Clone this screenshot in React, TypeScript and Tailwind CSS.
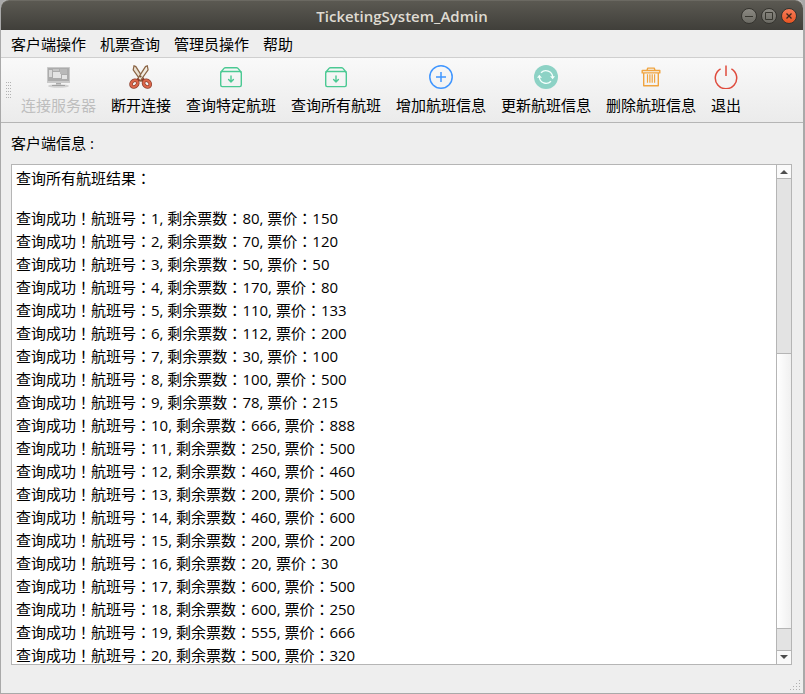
import type { ReactNode } from 'react';

interface ToolAction {
  label: string;
  icon: ReactNode;
  disabled?: boolean;
}

interface Flight {
  id: number;
  tickets: number;
  price: number;
}

const menus = ['客户端操作', '机票查询', '管理员操作', '帮助'];

const flights: Flight[] = [
  { id: 1, tickets: 80, price: 150 },
  { id: 2, tickets: 70, price: 120 },
  { id: 3, tickets: 50, price: 50 },
  { id: 4, tickets: 170, price: 80 },
  { id: 5, tickets: 110, price: 133 },
  { id: 6, tickets: 112, price: 200 },
  { id: 7, tickets: 30, price: 100 },
  { id: 8, tickets: 100, price: 500 },
  { id: 9, tickets: 78, price: 215 },
  { id: 10, tickets: 666, price: 888 },
  { id: 11, tickets: 250, price: 500 },
  { id: 12, tickets: 460, price: 460 },
  { id: 13, tickets: 200, price: 500 },
  { id: 14, tickets: 460, price: 600 },
  { id: 15, tickets: 200, price: 200 },
  { id: 16, tickets: 20, price: 30 },
  { id: 17, tickets: 600, price: 500 },
  { id: 18, tickets: 600, price: 250 },
  { id: 19, tickets: 555, price: 666 },
  { id: 20, tickets: 500, price: 320 },
];

function ComputerIcon() {
  return (
    <svg width="24" height="24" viewBox="0 0 24 24">
      <rect x="0" y="2" width="23" height="16" rx="0.5" fill="#c9c9c9" />
      <rect x="1" y="3" width="21" height="13" fill="#acacac" />
      <rect x="2" y="5" width="3" height="7" fill="#dadada" />
      <rect x="6" y="4" width="6" height="2" fill="#c4c4c4" />
      <rect x="6" y="7" width="8" height="6" fill="#e4e4e4" />
      <rect x="13" y="4" width="7" height="5" fill="#b9b9b9" />
      <rect x="15" y="10" width="5" height="4" fill="#e4e4e4" />
      <path d="M9 18h5v2H9z" fill="#aaa" />
      <ellipse cx="11.5" cy="21" rx="10.5" ry="1.8" fill="#d2d2d2" />
      <path d="M5 20.5h13" stroke="#a2a2a2" />
    </svg>
  );
}

function ScissorsIcon() {
  return (
    <svg width="24" height="24" viewBox="0 0 24 24" fill="none">
      <path d="M5 .8l1.8.8 8 12.5-2.6 2L4.2 4.8z" fill="#e9dfcf" stroke="#8a6444" strokeWidth="1.2" />
      <path d="M18.3.8l-1.8.8-8 12.5 2.6 2 8-11.3z" fill="#f1ebe0" stroke="#8a6444" strokeWidth="1.2" />
      <circle cx="11.6" cy="11.5" r="1" fill="#775439" />
      <path d="M10.2 14l-1.7 1.6M13.2 14l1.7 1.6" stroke="#8d3f2d" strokeWidth="3" />
      <ellipse cx="5.4" cy="18.6" rx="3" ry="3.7" transform="rotate(45 5.4 18.6)" stroke="#8d3f2d" strokeWidth="3.6" />
      <ellipse cx="5.4" cy="18.6" rx="3" ry="3.7" transform="rotate(45 5.4 18.6)" stroke="#dc664a" strokeWidth="2.2" />
      <ellipse cx="17.9" cy="18.6" rx="3" ry="3.7" transform="rotate(-45 17.9 18.6)" stroke="#8d3f2d" strokeWidth="3.6" />
      <ellipse cx="17.9" cy="18.6" rx="3" ry="3.7" transform="rotate(-45 17.9 18.6)" stroke="#dc664a" strokeWidth="2.2" />
    </svg>
  );
}

function ArchiveIcon() {
  return (
    <svg width="24" height="24" viewBox="0 0 24 24" fill="none" stroke="#4bc993" strokeWidth="1.4" strokeLinecap="round" strokeLinejoin="round">
      <rect x="1.7" y="6.5" width="20.6" height="15.1" rx="1.5" />
      <path d="M2 7l3-3.6q.6-.7 1.5-.7h11q.9 0 1.5.7L22 7" />
      <path d="M12 11v6M9.6 14.6l2.4 2.5 2.4-2.5" />
    </svg>
  );
}

function AddIcon() {
  return (
    <svg width="24" height="24" viewBox="0 0 24 24" fill="none" stroke="#4096ff" strokeWidth="1.5">
      <circle cx="12" cy="12" r="11.2" />
      <path d="M12 7v10M7 12h10" />
    </svg>
  );
}

function RefreshIcon() {
  return (
    <svg width="24" height="24" viewBox="0 0 24 24" fill="none">
      <circle cx="12" cy="12" r="12" fill="#8dd2c5" />
      <path d="M7 7.8a6.8 6.8 0 0 1 11.7 4.2M17 16.2a6.8 6.8 0 0 1-11.7-4.2" stroke="#f4fffc" strokeWidth="1.3" />
      <path d="M16 11.2h5l-2.3 3zM3 12.8h5l-2.7-3z" fill="#f4fffc" />
    </svg>
  );
}

function TrashIcon() {
  return (
    <svg width="24" height="24" viewBox="0 0 24 24" fill="none" stroke="#f0a43f" strokeWidth="1.4" strokeLinejoin="round">
      <path d="M3.2 5.5h17.6v2.4H3.2zM8 5.3l.8-2.2h6.4l.8 2.2M4.7 8.2v12.6h14.6V8.2" />
      <path d="M8.5 9.3v8.5M10.9 9.3v8.5M13.2 9.3v8.5M15.6 9.3v8.5" strokeWidth="1.2" />
    </svg>
  );
}

function PowerIcon() {
  return (
    <svg width="24" height="24" viewBox="0 0 24 24" fill="none" stroke="#df4b3d" strokeWidth="1.5">
      <path d="M6.6 3.8a10.7 10.7 0 1 0 10.8 0" />
      <path d="M12 .5V11" />
    </svg>
  );
}

const actions: ToolAction[] = [
  { label: '连接服务器', icon: <ComputerIcon />, disabled: true },
  { label: '断开连接', icon: <ScissorsIcon /> },
  { label: '查询特定航班', icon: <ArchiveIcon /> },
  { label: '查询所有航班', icon: <ArchiveIcon /> },
  { label: '增加航班信息', icon: <AddIcon /> },
  { label: '更新航班信息', icon: <RefreshIcon /> },
  { label: '删除航班信息', icon: <TrashIcon /> },
  { label: '退出', icon: <PowerIcon /> },
];

function TitleBar() {
  const button = 'w-4 h-4 rounded-full border border-[#35342f] flex items-center justify-center';

  return (
    <header className="h-[30px] shrink-0 rounded-t-lg border-t border-[#6b6962] bg-linear-to-b from-[#5b5952] to-[#403f3a] grid grid-cols-[1fr_auto_1fr] items-center px-1.5">
      <h1 className="col-start-2 font-semibold leading-5 text-[#dfdbd2]">TicketingSystem_Admin</h1>
      <div className="flex justify-end gap-1">
        <button aria-label="最小化" className={`${button} bg-linear-to-b from-[#8b8982] to-[#6c6b64]`}>
          <svg width="14" height="14" viewBox="0 0 14 14" stroke="#37362f">
            <path d="M3 7.5h8" />
          </svg>
        </button>
        <button aria-label="最大化" className={`${button} bg-linear-to-b from-[#8b8982] to-[#6c6b64]`}>
          <svg width="14" height="14" viewBox="0 0 14 14" stroke="#37362f" fill="none">
            <path d="M3.5 3.5h7v7h-7z" />
          </svg>
        </button>
        <button aria-label="关闭" className={`${button} bg-linear-to-b from-[#f67b57] to-[#e9541f]`}>
          <svg width="14" height="14" viewBox="0 0 14 14" stroke="#3d261c" strokeWidth="1.3">
            <path d="M4.5 4.5l5 5M9.5 4.5l-5 5" />
          </svg>
        </button>
      </div>
    </header>
  );
}

function ToolBar() {
  return (
    <div className="flex items-center shrink-0 h-[65px] pt-0.5 pl-1 border-b border-[#b5b5b5] bg-linear-to-b from-[#f9f9f9] to-[#ebebeb]">
      <svg width="6" height="18" viewBox="0 0 6 18" className="shrink-0" fill="#b3b3b3">
        {[0, 3, 6, 9, 12, 15].map((y) => (
          <path key={y} d={`M1 ${y}h1v1h-1zM3 ${y}h1v1h-1zM5 ${y}h1v1h-1z`} />
        ))}
      </svg>
      <div className="flex gap-[15px] pl-2.5">
        {actions.map((action) => (
          <button
            key={action.label}
            disabled={action.disabled}
            className="flex flex-col items-center gap-1 whitespace-nowrap leading-6 disabled:text-[#bebebe]"
          >
            {action.icon}
            {action.label}
          </button>
        ))}
      </div>
    </div>
  );
}

function ScrollBar() {
  return (
    <div className="w-[15px] shrink-0 flex flex-col border-l border-[#b5b5b5] bg-[#e3e3e3]">
      <button aria-label="向上滚动" className="h-3.5 shrink-0 flex items-center justify-center bg-[#fafafa] border-b border-[#b5b5b5]">
        <svg width="8" height="4" viewBox="0 0 8 4" fill="#4d4d4d">
          <path d="M4 0l4 4H0z" />
        </svg>
      </button>
      <div className="grow-[175]" />
      <div className="grow-[275] border-y border-[#b5b5b5] bg-linear-to-r from-white to-[#f0f0f0]" />
      <div className="grow-[21]" />
      <button aria-label="向下滚动" className="h-3.5 shrink-0 flex items-center justify-center bg-[#fafafa] border-t border-[#b5b5b5]">
        <svg width="8" height="4" viewBox="0 0 8 4" fill="#4d4d4d">
          <path d="M0 0h8L4 4z" />
        </svg>
      </button>
    </div>
  );
}

export default function App() {
  return (
    <div className="h-screen bg-[#a9a9a9] font-['Open_Sans','Noto_Sans_CJK_JP',sans-serif] text-[15px] text-black">
      <div className="h-full flex flex-col rounded-t-lg border-l border-r-2 border-b border-[#a9a9a9] bg-[#eee]">
        <TitleBar />

        <nav className="h-7 shrink-0 flex items-center gap-3.5 px-2.5 border-b border-[#cfcfcf]">
          {menus.map((menu) => (
            <button key={menu} className="whitespace-nowrap leading-6">
              {menu}
            </button>
          ))}
        </nav>

        <ToolBar />

        <main className="flex-1 min-h-0 flex flex-col pl-2.5 pr-[11px]">
          <h2 id="log-label" className="h-[41px] shrink-0 flex items-center whitespace-pre">
            客户端信息 :
          </h2>
          <div className="flex-1 min-h-0 flex border border-[#b5b5b5] bg-white">
            <div role="log" aria-labelledby="log-label" className="flex-1 min-w-0 overflow-hidden px-1 pt-0.5 leading-[23px] whitespace-nowrap">
              <p>查询所有航班结果：</p>
              <p className="h-[17px]" />
              {flights.map((f) => (
                <p key={f.id}>
                  查询成功！航班号：{f.id}, 剩余票数：{f.tickets}, 票价：{f.price}
                </p>
              ))}
            </div>
            <ScrollBar />
          </div>
        </main>

        {/* Status bar with size grip */}
        <footer className="h-7 shrink-0 flex items-end justify-end p-0.5">
          <svg width="12" height="12" viewBox="0 0 12 12" fill="#b0b0b0">
            <path d="M10 1h1v1h-1zM7 4h1v1h-1zM10 4h1v1h-1zM4 7h1v1h-1zM7 7h1v1h-1zM10 7h1v1h-1zM1 10h1v1h-1zM4 10h1v1h-1zM7 10h1v1h-1zM10 10h1v1h-1z" />
          </svg>
        </footer>
      </div>
    </div>
  );
}
